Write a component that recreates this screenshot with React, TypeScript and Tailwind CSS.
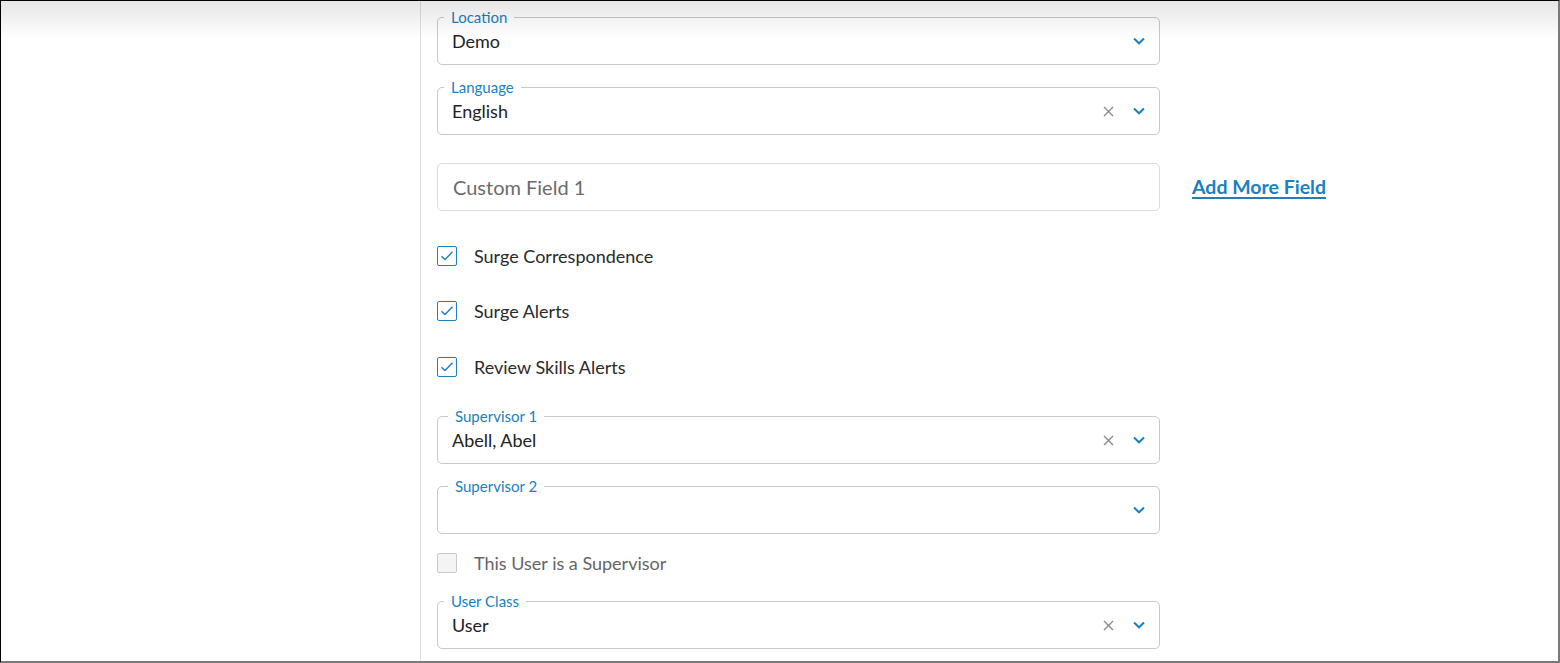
import React from "react";

const font = { fontFamily: "Lato, 'Open Sans', sans-serif" };

function Chevron() {
  return (
    <svg width="12" height="8" viewBox="0 0 12 8" className="block">
      <path d="M1 1.5 L6 6.3 L11 1.5" fill="none" stroke="#1b7fc2" strokeWidth="2" />
    </svg>
  );
}

function Clear() {
  return (
    <svg width="11" height="11" viewBox="0 0 11 11" className="block">
      <path d="M1 1 L10 10 M10 1 L1 10" fill="none" stroke="#8a8a8a" strokeWidth="1.4" />
    </svg>
  );
}

function SelectField({
  label,
  value,
  clearable,
  wide,
}: {
  label: string;
  value?: string;
  clearable?: boolean;
  wide?: boolean;
}) {
  return (
    <div className="relative h-[48px] w-[723px] rounded-[5px] border border-[#c8c8c8] flex items-center pl-[14px] pr-[14px]">
      <span
        className={`absolute top-[-9px] bg-white text-[15px] leading-[16px] text-[#1b7fc2] ${
          wide ? "left-[10px] px-[7px]" : "left-[6px] px-[7px]"
        }`}
      >
        {label}
      </span>
      <span className="flex-1 text-[18px] text-[#222]">{value}</span>
      {clearable && (
        <span className="mr-[19px]">
          <Clear />
        </span>
      )}
      <Chevron />
    </div>
  );
}

function Check({ label, checked }: { label: string; checked: boolean }) {
  return (
    <div className="flex items-center h-[20px]">
      {checked ? (
        <span className="w-[20px] h-[20px] rounded-[2px] border border-[#1b7fc2] bg-white flex items-center justify-center">
          <svg width="14" height="12" viewBox="0 0 14 12">
            <path d="M1.5 6.2 L5 9.6 L12.5 1.8" fill="none" stroke="#1b7fc2" strokeWidth="1.4" />
          </svg>
        </span>
      ) : (
        <span className="w-[20px] h-[20px] rounded-[2px] border border-[#c8c8c8] bg-[#f4f4f4]" />
      )}
      <span className={`ml-[17px] text-[18px] ${checked ? "text-[#2a2a2a]" : "text-[#666]"}`}>{label}</span>
    </div>
  );
}

export default function App() {
  return (
    <div
      className="relative h-[663px] w-full overflow-hidden bg-white border-t border-l border-t-black border-l-black border-r-2 border-b-2 border-r-[#7a7a7a] border-b-[#7a7a7a]"
      style={font}
    >
      <div className="flex h-full">
        <div className="w-[420px] h-full border-r border-[#dedede] shrink-0" />
        <div className="pl-[16px] pt-[16px] flex flex-col">
          <SelectField label="Location" value="Demo" />
          <div className="mt-[22px]">
            <SelectField label="Language" value="English" clearable />
          </div>
          <div className="mt-[28px] flex items-center">
            <div className="h-[48px] w-[723px] rounded-[5px] border border-[#dcdcdc] flex items-center pl-[15px]">
              <span className="text-[20px] text-[#6b6b6b]">Custom Field 1</span>
            </div>
            <a className="ml-[32px] text-[19.5px] font-bold text-[#1b7fc2] underline underline-offset-[3px] decoration-2 cursor-pointer">
              Add More Field
            </a>
          </div>
          <div className="mt-[35px]">
            <Check label="Surge Correspondence" checked />
          </div>
          <div className="mt-[35px]">
            <Check label="Surge Alerts" checked />
          </div>
          <div className="mt-[36px]">
            <Check label="Review Skills Alerts" checked />
          </div>
          <div className="mt-[39px]">
            <SelectField label="Supervisor 1" value="Abell, Abel" clearable wide />
          </div>
          <div className="mt-[22px]">
            <SelectField label="Supervisor 2" wide />
          </div>
          <div className="mt-[19px]">
            <Check label="This User is a Supervisor" checked={false} />
          </div>
          <div className="mt-[28px]">
            <SelectField label="User Class" value="User" clearable />
          </div>
        </div>
      </div>
      <div className="pointer-events-none absolute left-0 right-0 top-0 h-[38px] bg-gradient-to-b from-black/10 to-transparent" />
    </div>
  );
}
